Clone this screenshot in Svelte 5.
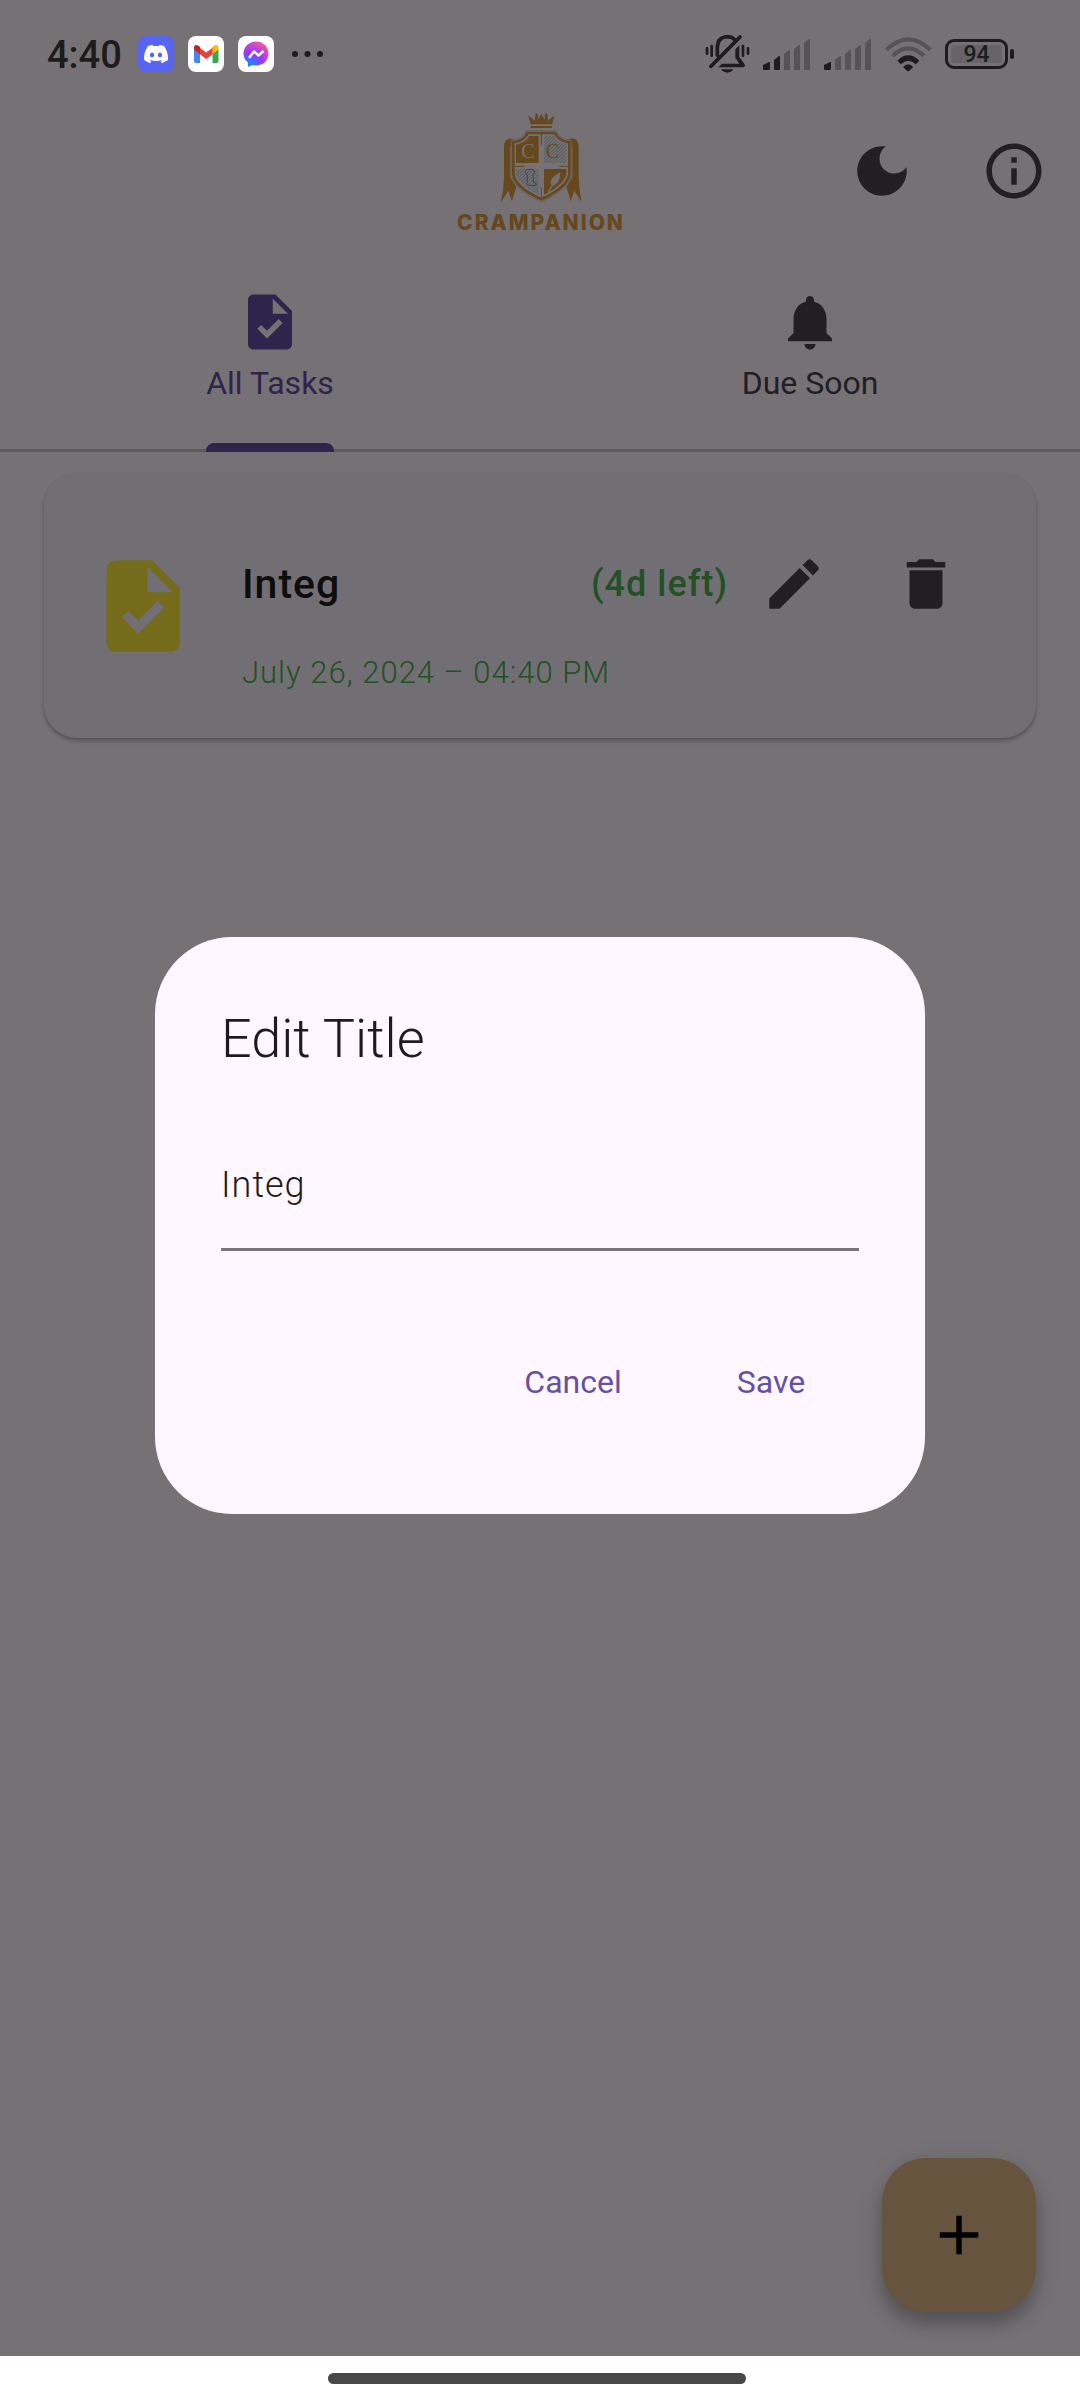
<script lang="ts">
  const taskIcon =
    'M14 2H6c-1.1 0-1.99.9-1.99 2L4 20c0 1.1.89 2 1.99 2H18c1.1 0 2-.9 2-2V8l-6-6zm-3.06 16L7.4 14.46l1.41-1.41 2.12 2.12 4.24-4.24 1.41 1.41L10.94 18zM13 9V3.5L18.5 9H13z';
  const bellIcon =
    'M12 22c1.1 0 2-.9 2-2h-4c0 1.1.89 2 2 2zm6-6v-5c0-3.07-1.64-5.64-4.5-6.32V4c0-.83-.67-1.5-1.5-1.5s-1.5.67-1.5 1.5v.68C7.63 5.36 6 7.92 6 11v5l-2 2v1h16v-1l-2-2z';

  const tabs = [
    { id: 'all', label: 'All Tasks', icon: taskIcon },
    { id: 'due', label: 'Due Soon', icon: bellIcon },
  ];
  const barPaths = [
    'M0 26l6-3q1-.4 1 .6V30q0 1-1 1H1q-1 0-1-1z',
    'M11 21l5-4q1-.4 1 .6V30q0 1-1 1h-4q-1 0-1-1z',
    'M21 15l5-4q1-.4 1 .6V30q0 1-1 1h-4q-1 0-1-1z',
    'M31 10l5-4q1-.4 1 .6V30q0 1-1 1h-4q-1 0-1-1z',
    'M41 4l5-4q1-.4 1 .6V30q0 1-1 1h-4q-1 0-1-1z',
  ];
  const signals = [2, 1];

  let activeTab = $state('all');
  let taskTitle = $state('Integ');
  let draft = $state('Integ');
  let editing = $state(true);

  function save() {
    taskTitle = draft;
    editing = false;
  }
</script>

<div class="screen">
  <div class="status">
    <span class="clock">4:40</span>
    <div class="apps">
      <svg viewBox="0 0 36 36" aria-label="Discord" role="img">
        <rect width="36" height="36" rx="8" fill="#5865f2" />
        <g transform="translate(6 6)">
          <path fill="#fff" d="M20.317 4.3698a19.7913 19.7913 0 00-4.8851-1.5152.0741.0741 0 00-.0785.0371c-.211.3753-.4447.8648-.6083 1.2495-1.8447-.2762-3.68-.2762-5.4868 0-.1636-.3933-.4058-.8742-.6177-1.2495a.077.077 0 00-.0785-.037 19.7363 19.7363 0 00-4.8852 1.515.0699.0699 0 00-.0321.0277C.5334 9.0458-.319 13.5799.0992 18.0578a.0824.0824 0 00.0312.0561c2.0528 1.5076 4.0413 2.4228 5.9929 3.0294a.0777.0777 0 00.0842-.0276c.4616-.6304.8731-1.2952 1.226-1.9942a.076.076 0 00-.0416-.1057c-.6528-.2476-1.2743-.5495-1.8722-.8923a.077.077 0 01-.0076-.1277c.1258-.0943.2517-.1923.3718-.2914a.0743.0743 0 01.0776-.0105c3.9278 1.7933 8.18 1.7933 12.0614 0a.0739.0739 0 01.0785.0095c.1202.099.246.1981.3728.2924a.077.077 0 01-.0066.1276 12.2986 12.2986 0 01-1.873.8914.0766.0766 0 00-.0407.1067c.3604.698.7719 1.3628 1.225 1.9932a.076.076 0 00.0842.0286c1.961-.6067 3.9495-1.5219 6.0023-3.0294a.077.077 0 00.0313-.0552c.5004-5.177-.8382-9.6739-3.5485-13.6604a.061.061 0 00-.0312-.0286zM8.02 15.3312c-1.1825 0-2.1569-1.0857-2.1569-2.419 0-1.3332.9555-2.4189 2.157-2.4189 1.2108 0 2.1757 1.0952 2.1568 2.419 0 1.3332-.9555 2.4189-2.1569 2.4189zm7.9748 0c-1.1825 0-2.1569-1.0857-2.1569-2.419 0-1.3332.9554-2.4189 2.1569-2.4189 1.2108 0 2.1757 1.0952 2.1568 2.419 0 1.3332-.946 2.4189-2.1568 2.4189Z" />
        </g>
      </svg>
      <svg viewBox="0 0 36 36" aria-label="Gmail" role="img">
        <rect width="36" height="36" rx="8" fill="#fff" />
        <path fill="#4285f4" d="M6 13l6 4v10H8q-2 0-2-2z" />
        <path fill="#34a853" d="M24.500 17l6-4v12q0 2-2 2h-4z" />
        <path fill="#ea4335" d="M11.500 11.500l6.700 5 6.700-5v6.500l-6.700 5-6.700-5z" />
        <path fill="#c5221f" d="M6 11.500q0-2.500 2.500-2.500 1 0 2 .7l1.500 1.200V18l-6-4.500z" />
        <path fill="#fbbc04" d="M30.500 11.500q0-2.500-2.500-2.500-1 0-2 .7l-1.500 1.200V18l6-4.500z" />
      </svg>
      <svg viewBox="0 0 36 36" aria-label="Messenger" role="img">
        <defs>
          <radialGradient id="chat" cx="0.2" cy="1" r="1.1">
            <stop offset="0" stop-color="#0a8cff" />
            <stop offset="0.25" stop-color="#3a70ff" />
            <stop offset="0.55" stop-color="#a033ff" />
            <stop offset="0.8" stop-color="#c84ad0" />
            <stop offset="1" stop-color="#ff5c87" />
          </radialGradient>
        </defs>
        <rect width="36" height="36" rx="8" fill="#fff" />
        <path fill="url(#chat)" d="M18 5.500C11 5.500 5.500 10.500 5.500 17.500c0 4 1.700 7 4.500 9v4.500l4.300-2.100c1.200.3 2.400.5 3.700.5 7 0 12.500-5 12.500-12S25 5.500 18 5.500z" />
        <path fill="none" stroke="#fff" stroke-width="2.400" stroke-linejoin="round" d="M11 22l5-6.500 4.500 4L25.500 15" />
      </svg>
    </div>
    <svg class="more" viewBox="0 0 32 6" aria-hidden="true">
      <circle cx="3" cy="3" r="3" /><circle cx="15.500" cy="3" r="3" /><circle cx="28" cy="3" r="3" />
    </svg>
    <div class="system">
      <svg class="mute" viewBox="75 107 133 114" aria-hidden="true">
        <g fill="none" stroke="#1c1c1c" stroke-width="9" stroke-linecap="round">
          <path d="M111 168v-26q2-29 30-30 17 0 24 13M92 201l87-88" stroke-width="11" />
          <path d="M80 147v16M94 140v29M188 140v29M203 147v16" stroke-width="8" />
        </g>
        <path fill="#1c1c1c" d="M165 150l12-12v35l16 22q3 8-6 9h-73l11-11h52l-12-18zM122 210h37q-7 10-18 10t-19-10z" />
      </svg>
      {#each signals as level}
        <svg class="signal" viewBox="0 0 48 31" aria-hidden="true">
          {#each barPaths as d, i}
            <path {d} fill={i < level ? '#1c1c1c' : '#565356'} />
          {/each}
        </svg>
      {/each}
      <svg class="wifi" viewBox="611 111 140 104" aria-hidden="true">
        <g fill="none" stroke-width="12">
          <path stroke="#565356" d="M615 149q65-62 131 0M634 167q46-44 93 0" />
          <path stroke="#1c1c1c" stroke-width="15" d="M653 187q27-27 55 0" />
        </g>
        <path fill="#1c1c1c" d="M665 200q15-16 30 0l-12 12q-3 2-6 0z" />
      </svg>
      <div class="battery"><span class="level">94</span></div>
    </div>
  </div>

  <header>
    <div class="brand">
      <svg class="crest" viewBox="210 66 240 276" aria-hidden="true">
        <defs>
          <pattern id="hatch" width="7" height="7" patternUnits="userSpaceOnUse" patternTransform="rotate(45)">
            <rect width="7" height="7" fill="#f1f4f6" />
            <rect width="2" height="7" fill="#b9c0c6" />
          </pattern>
          <clipPath id="field"><path d="M294 138H368Q376 158 407 164V250Q402 285 331 318Q260 285 255 250V164Q286 158 294 138z" /></clipPath>
        </defs>
        <g fill="#e09c40">
          <path d="M299 103L291 77l7 4 13 11 2-19 4-4 4 6-1 15 11-18 11 18-1-15 4-6 4 4 2 19 13-11 7-4-8 26z" />
          <path d="M299 108h64v6h-64z" />
          <path d="M258 152Q246 143 232 146 220 150 219 168V262Q218 300 210 337L232 302 243 334Q250 308 256 290L238 262V172Q240 158 258 152z" />
          <path d="M404 152Q416 143 430 146 442 150 443 168V262Q444 300 452 337L430 302 419 334Q412 308 406 290L424 262V172Q422 158 404 152z" />
        </g>
        <path d="M287 122H375Q383 146 421 151V254Q417 298 331 336Q245 298 241 254V151Q279 146 287 122z" fill="#fef7ff" stroke="#c8c6cc" stroke-width="2" />
        <path d="M290 129H372Q381 152 415 157V252Q410 292 331 328Q252 292 247 252V157Q281 152 290 129z" fill="#fef7ff" stroke="#e09c40" stroke-width="8" />
        <g clip-path="url(#field)">
          <path fill="#e09c40" d="M250 134h73v85h-73zM339 237h73v85h-73z" />
          <path fill="url(#hatch)" d="M339 134h73v85h-73zM250 237h73v85h-73z" />
        </g>
        <path d="M331 130v34M331 292v32M250 229h30M384 229h28" stroke="#e09c40" stroke-width="3" />
        <text x="291" y="205" text-anchor="middle" fill="#f4f5f7">C</text>
        <text x="364" y="205" text-anchor="middle" fill="#e09c40">C</text>
        <path fill="#f4f5f7" d="M350 306l12-20q-12-18 26-40 0 36-22 41l-13 20z" />
        <path fill="none" stroke="#8f989f" stroke-width="3" d="M284 240q14-5 24 0 6 8-2 14l2 24q10 0 8 7-8 4-26 0-8-6 0-9l-2-24q-8-4-4-12z" />
      </svg>
      <span class="wordmark">CRAMPANION</span>
    </div>
    <div class="actions">
      <button class="icon-btn" aria-label="Dark mode">
        <svg viewBox="0 0 24 24"><path d="M12 3c-4.970 0-9 4.030-9 9s4.030 9 9 9 9-4.030 9-9c0-.46-.04-.92-.1-1.360-.98 1.370-2.580 2.260-4.400 2.260-2.980 0-5.400-2.420-5.400-5.400 0-1.810.89-3.420 2.260-4.400-.44-.06-.9-.1-1.360-.1z" /></svg>
      </button>
      <button class="icon-btn" aria-label="About">
        <svg viewBox="0 0 24 24"><path d="M11 7h2v2h-2zm0 4h2v6h-2zm1-9C6.480 2 2 6.480 2 12s4.480 10 10 10 10-4.480 10-10S17.520 2 12 2zm0 18c-4.410 0-8-3.590-8-8s3.590-8 8-8 8 3.590 8 8-3.590 8-8 8z" /></svg>
      </button>
    </div>
  </header>

  <div class="tabs" role="tablist">
    {#each tabs as tab}
      <button class="tab" class:active={activeTab === tab.id} role="tab" aria-selected={activeTab === tab.id} onclick={() => (activeTab = tab.id)}>
        <span class="tab-body">
          <svg viewBox="0 0 24 24" aria-hidden="true"><path d={tab.icon} /></svg>
          <span>{tab.label}</span>
        </span>
      </button>
    {/each}
  </div>

  <main>
    <article class="card">
      <svg class="leading" viewBox="0 0 24 24" aria-hidden="true"><path d={taskIcon} /></svg>
      <div class="details">
        <div class="title-row">
          <h2>{taskTitle}</h2>
          <span class="left">(4d left)</span>
          <button class="icon-btn" aria-label="Edit" onclick={() => (editing = true)}>
            <svg viewBox="0 0 24 24"><path d="M3 17.250V21h3.750L17.810 9.940l-3.750-3.750L3 17.250zM20.710 7.040c.39-.39.39-1.020 0-1.410l-2.340-2.340c-.39-.39-1.020-.39-1.410 0l-1.830 1.830 3.750 3.750 1.830-1.830z" /></svg>
          </button>
          <button class="icon-btn" aria-label="Delete">
            <svg viewBox="0 0 24 24"><path d="M6 19c0 1.100.9 2 2 2h8c1.100 0 2-.9 2-2V7H6v12zM19 4h-3.500l-1-1h-5l-1 1H5v2h14V4z" /></svg>
          </button>
        </div>
        <p class="date">July 26, 2024 – 04:40 PM</p>
      </div>
    </article>
    <button class="fab" aria-label="Add task">
      <svg viewBox="0 0 24 24"><path d="M19 13h-6v6h-2v-6H5v-2h6V5h2v6h6v2z" /></svg>
    </button>
  </main>

  <div class="nav"><span class="handle"></span></div>

  {#if editing}
    <div class="scrim">
      <div class="dialog" role="dialog" aria-modal="true" aria-labelledby="dialog-title">
        <h1 id="dialog-title">Edit Title</h1>
        <input type="text" aria-labelledby="dialog-title" bind:value={draft} />
        <div class="buttons">
          <button onclick={() => (editing = false)}>Cancel</button>
          <button onclick={save}>Save</button>
        </div>
      </div>
    </div>
  {/if}
</div>

<style>
  :global(body) {
    background: #fef7ff;
  }
  .screen {
    position: relative;
    display: flex;
    flex-direction: column;
    min-height: 100vh;
    background: #fef7ff;
    color: #49454f;
    font-family: Roboto, "Liberation Sans", sans-serif;
  }
  .screen * {
    box-sizing: border-box;
  }
  svg {
    display: block;
    flex: none;
  }
  button {
    border: 0;
    padding: 0;
    background: none;
    color: inherit;
    font: inherit;
    cursor: pointer;
  }
  h1,
  h2,
  p {
    margin: 0;
    font-weight: 300;
  }

  .status {
    position: relative;
    z-index: 2;
    display: flex;
    align-items: center;
    height: 94px;
    padding: 14px 66px 0 47px;
    color: #1c1c1c;
    fill: #1c1c1c;
  }
  .clock {
    padding-top: 2px;
    font-size: 38px;
    font-weight: 500;
    line-height: 44px;
  }
  .apps {
    display: flex;
    gap: 14px;
    margin-left: 16px;
  }
  .apps svg {
    width: 36px;
    height: 36px;
  }
  .more {
    width: 32px;
    height: 6px;
    margin-left: 18px;
  }
  .system {
    display: flex;
    align-items: center;
    gap: 13px;
    margin-left: auto;
  }
  .mute {
    width: 45px;
    height: 38px;
  }
  .signal {
    width: 48px;
    height: 31px;
  }
  .wifi {
    width: 47px;
    height: 35px;
  }
  .battery {
    position: relative;
    display: flex;
    width: 63px;
    height: 30px;
    margin-right: 6px;
    padding: 3px;
    border: 3px solid #1c1c1c;
    border-radius: 9px;
  }
  .battery::after {
    content: "";
    position: absolute;
    top: 7px;
    right: -9px;
    width: 4px;
    height: 10px;
    border-radius: 2px;
    background: #1c1c1c;
  }
  .level {
    flex: 1;
    border-radius: 2px;
    background: #686367;
    font-size: 23px;
    font-weight: 500;
    line-height: 20px;
    text-align: center;
  }

  header {
    display: grid;
    grid-template-columns: 1fr auto 1fr;
    align-items: center;
    height: 154px;
  }
  .brand {
    grid-column: 2;
    display: flex;
    flex-direction: column;
    align-items: center;
    gap: 7px;
    padding: 4px 0 0 2px;
  }
  .crest {
    width: 80px;
    height: 92px;
  }
  .crest text {
    font-family: "Liberation Serif", serif;
    font-size: 60px;
  }
  .wordmark {
    color: #e09c40;
    font-family: Inter, "Liberation Sans", sans-serif;
    font-size: 21px;
    font-weight: 800;
    line-height: 24px;
    letter-spacing: 2px;
  }
  .actions {
    display: flex;
    justify-self: end;
  }
  .icon-btn {
    display: grid;
    place-items: center;
    width: 132px;
    height: 132px;
  }
  .icon-btn svg,
  .tab svg {
    width: 66px;
    height: 66px;
    fill: #49454f;
  }

  .tabs {
    display: flex;
    height: 204px;
    border-bottom: 3px solid #cac4d0;
  }
  .tab {
    flex: 1;
    display: flex;
    justify-content: center;
    margin-bottom: -3px;
    font-size: 32px;
    font-weight: 400;
    line-height: 44px;
  }
  .tab-body {
    display: flex;
    flex-direction: column;
    align-items: center;
    gap: 6px;
    height: 100%;
    padding-top: 41px;
  }
  .tab.active {
    color: #6750a4;
  }
  .tab.active svg {
    fill: #6750a4;
  }
  .active .tab-body::after {
    content: "";
    width: 100%;
    height: 9px;
    margin-top: auto;
    border-radius: 8px 8px 0 0;
    background: #6750a4;
  }

  main {
    flex: 1;
    display: flex;
    flex-direction: column;
    justify-content: space-between;
    padding: 21px 44px 44px;
  }
  .card {
    display: flex;
    align-items: center;
    gap: 44px;
    padding: 45px 44px 44px;
    border-radius: 33px;
    background: #f6f2fc;
    box-shadow: 0 3px 4px rgb(0 0 0 / 24%), 0 1px 2px rgb(0 0 0 / 10%);
  }
  .leading {
    width: 110px;
    height: 110px;
    fill: #ffeb3b;
  }
  .details {
    flex: 1;
  }
  .title-row {
    display: flex;
    align-items: center;
  }
  h2 {
    flex: 1;
    color: #1d1b20;
    font-size: 41px;
    font-weight: 500;
    letter-spacing: 1px;
  }
  .left {
    color: #4caf50;
    font-size: 36px;
    font-weight: 500;
    letter-spacing: 1px;
  }
  .date {
    padding-top: 1px;
    color: #4caf50;
    font-size: 31px;
    line-height: 43px;
    letter-spacing: 1px;
  }
  .fab {
    display: grid;
    place-items: center;
    align-self: flex-end;
    width: 154px;
    height: 154px;
    border-radius: 44px;
    background: #deb887;
    box-shadow: 0 12px 18px rgb(0 0 0 / 24%), 0 6px 28px rgb(0 0 0 / 10%);
  }
  .fab svg {
    width: 66px;
    height: 66px;
    fill: #000;
  }

  .nav {
    display: flex;
    justify-content: center;
    height: 44px;
    padding: 17px 6px 0 0;
    background: #fff;
  }
  .handle {
    width: 418px;
    height: 11px;
    border-radius: 6px;
    background: #484848;
  }

  .scrim {
    position: absolute;
    inset: 0 0 44px;
    display: flex;
    align-items: center;
    justify-content: center;
    padding-top: 94px;
    background: rgb(0 0 0 / 54%);
  }
  .dialog {
    width: 770px;
    max-width: 90%;
    padding: 66px;
    border-radius: 77px;
    background: #fef7ff;
    color: #1d1b20;
  }
  h1 {
    font-size: 54px;
    line-height: 72px;
  }
  input {
    display: block;
    width: 100%;
    height: 132px;
    margin: 44px 0 65px;
    padding: 3px 0 0;
    border: 0;
    border-bottom: 3px solid #79747e;
    border-radius: 0;
    outline: 0;
    background: none;
    color: #1d1b20;
    font: 300 36px/54px Roboto, "Liberation Sans", sans-serif;
    letter-spacing: 1px;
  }
  .buttons {
    display: flex;
    justify-content: flex-end;
    gap: 22px;
  }
  .buttons button {
    min-width: 176px;
    height: 132px;
    padding: 0 33px;
    color: #6750a4;
    font-size: 32px;
    font-weight: 400;
  }
</style>
